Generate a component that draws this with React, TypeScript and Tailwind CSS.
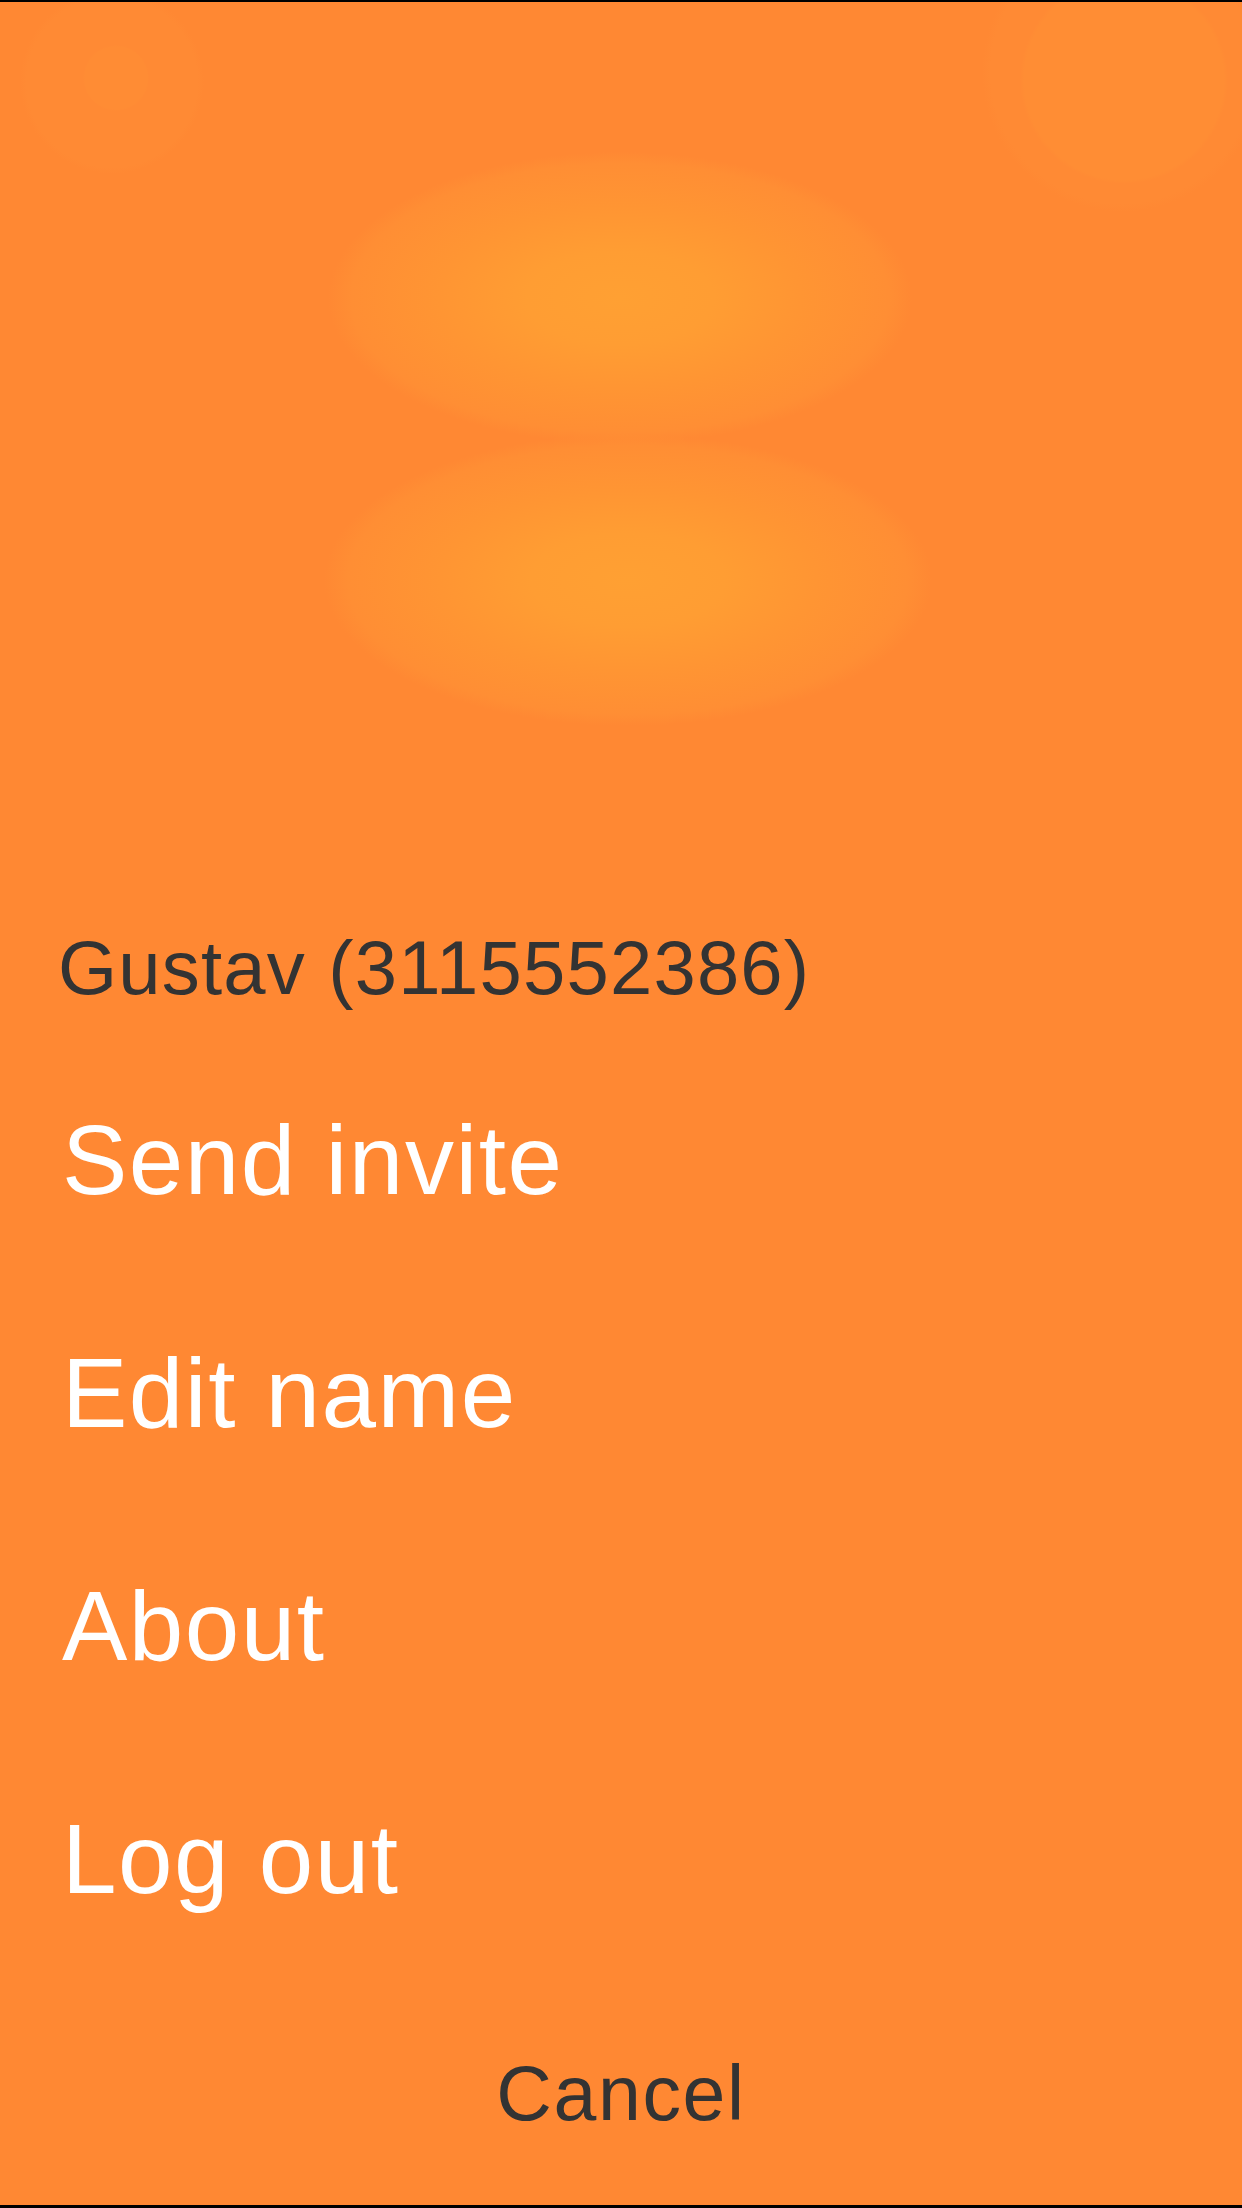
const MENU_ITEMS = ["Send invite", "Edit name", "About", "Log out"];

export default function App() {
  return (
    <main className="flex h-[2208px] w-[1242px] flex-col overflow-hidden border-t-2 border-b-[3px] border-black bg-[#ff8833] font-['Liberation_Sans',Arial,sans-serif]">
      {/* soft background bubbles */}
      <div className="h-[890px] w-full bg-[image:radial-gradient(circle_33px_at_116px_76px,#ff8c34_0%,#ff8c34_95%,rgba(255,140,52,0)_100%),radial-gradient(circle_92px_at_112px_80px,#ff8a34_0%,#ff8a34_93%,rgba(255,138,52,0)_100%),radial-gradient(circle_104px_at_1124px_78px,#ff8d34_0%,#ff8d34_96%,rgba(255,141,52,0)_100%),radial-gradient(circle_140px_at_1122px_70px,#ff8a34_0%,#ff8a34_94%,rgba(255,138,52,0)_100%),radial-gradient(ellipse_292px_146px_at_620px_296px,#ffa033_0%,#ff9d33_32%,#ff9533_62%,#ff8e34_92%,rgba(255,139,52,0)_100%),radial-gradient(ellipse_304px_146px_at_628px_578px,#ffa033_0%,#ff9d33_32%,#ff9533_62%,#ff8e34_92%,rgba(255,139,52,0)_100%)]" />

      <div className="h-[152px] pl-[58px] text-[76px] leading-[152px] tracking-[1.2px] text-[#333333]">
        Gustav (3115552386)
      </div>

      <nav className="flex flex-col">
        {MENU_ITEMS.map((item) => (
          <button
            key={item}
            className="h-[233px] pl-[62px] text-left text-[98px] leading-[233px] tracking-[1.5px] text-white"
          >
            {item}
          </button>
        ))}
      </nav>

      <button className="mt-[47px] h-[140px] text-center text-[77px] leading-[140px] tracking-[1.6px] text-[#333333]">
        Cancel
      </button>
    </main>
  );
}
